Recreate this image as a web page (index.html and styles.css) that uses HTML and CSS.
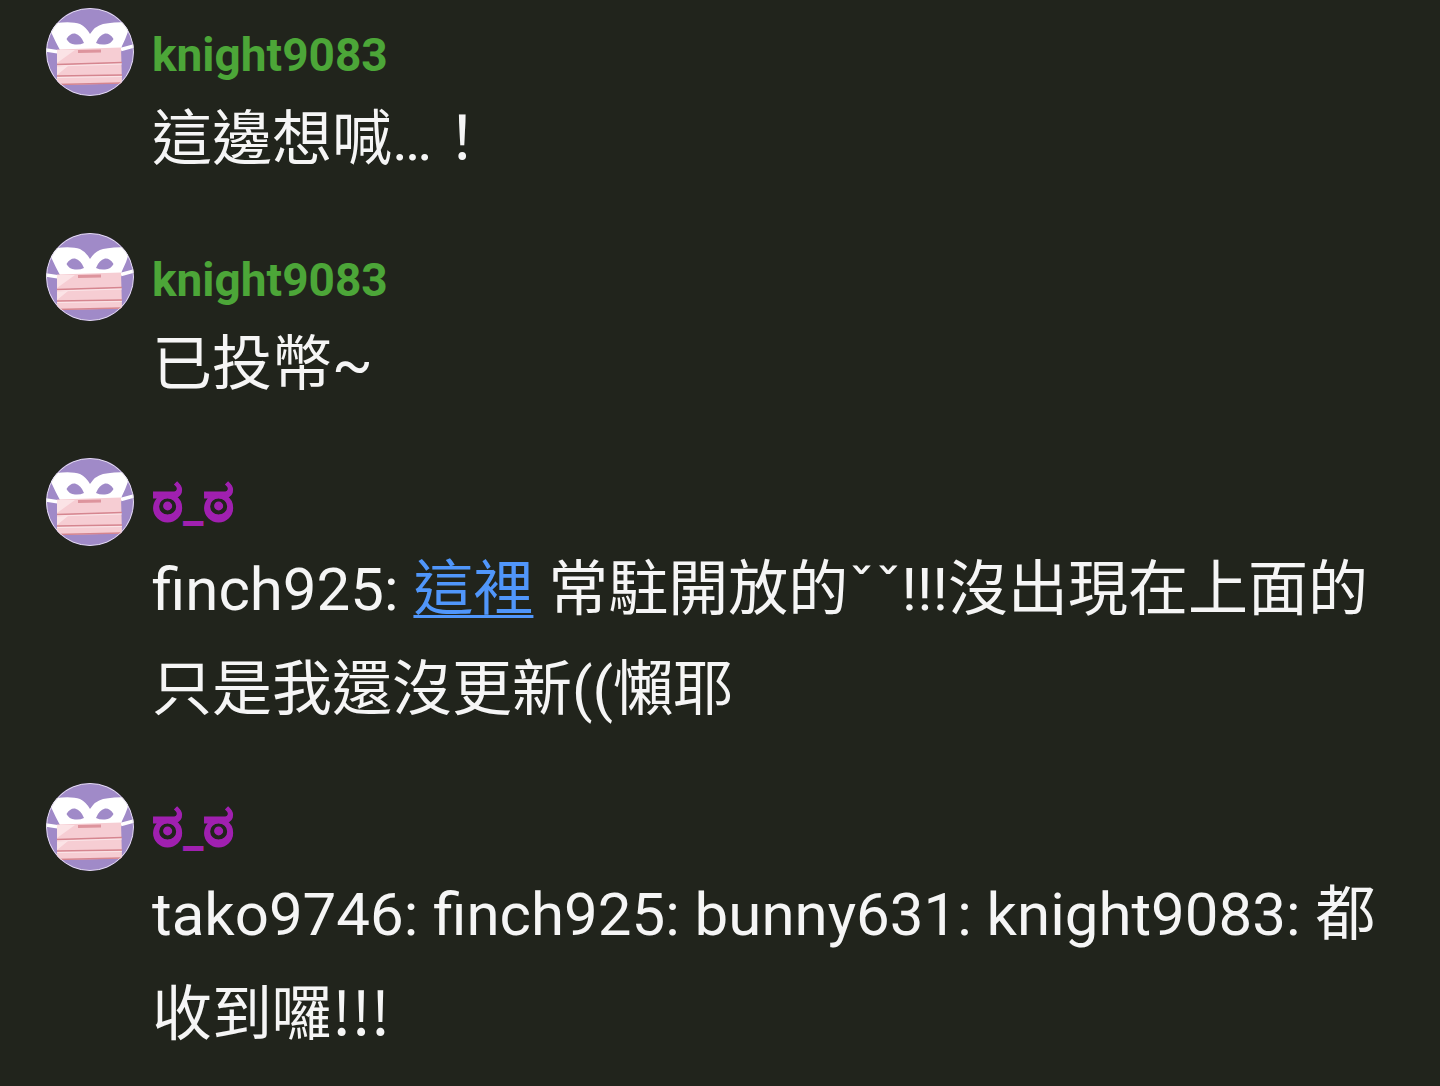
FILE: index.html
```html
<!DOCTYPE html>
<html lang="zh-Hant">
<head>
  <meta charset="UTF-8" />
  <meta name="viewport" content="width=device-width, initial-scale=1.0"/>
  <title>Chat</title>
  <link rel="stylesheet" href="styles.css">
</head>
<body>

  <!-- shared avatar drawing -->
  <svg class="sprite" aria-hidden="true">
    <symbol id="avatar" viewBox="0 0 88 88">
      <clipPath id="circle"><circle cx="44" cy="44" r="44"/></clipPath>
      <g clip-path="url(#circle)">
        <rect width="88" height="88" fill="#a08ac8"/>
        <path d="M0 15 H10 Q26 13 34 16 Q40 19 44 26 Q49 18 57 16 Q66 14 84 14 Q83 24 76 38 L74 44 H15 Q9 33 5 24 L0 20 Z" fill="#fff"/>
        <path d="M20.500 31 Q24 25 29 25.500 Q35 27 38 35 Q34 37 29 36.500 Q23 36 20.500 31Z M67.500 31 Q64 25 59 25.500 Q53 27 50 35 Q54 37 59 36.500 Q65 36 67.500 31Z" fill="#a08ac8"/>
        <path d="M0 42 L13 44 M75 41.500 L88 38" stroke="#fff" stroke-width="3.500"/>
        <path d="M11 41.500 L75 39.500 L76 75.500 L11 77Z" fill="#f6cdd3"/>
        <path d="M11 42 H29 L11 55Z M11 67 L22 58 L11 59Z" fill="#fbe3e6"/>
        <path d="M32 43.500 L55 43" stroke="#dd949d" stroke-width="3"/>
        <path d="M11 56.500 L76 54.500 M11 68 L76 67 M11 76.500 L76 75" stroke="#d5858f" stroke-width="1.500"/>
        <path d="M11 58 L76 56 M11 69.500 L76 68.500" stroke="#fff" stroke-opacity=".5"/>
        <circle cx="44" cy="44" r="43.500" fill="none" stroke="#e4deed"/>
      </g>
    </symbol>
  </svg>

  <main class="chat">
    <article class="message">
      <svg class="avatar" aria-hidden="true"><use href="#avatar"/></svg>
      <h2 class="name green">knight9083</h2>
      <p class="text">這邊想喊…！</p>
    </article>

    <article class="message">
      <svg class="avatar" aria-hidden="true"><use href="#avatar"/></svg>
      <h2 class="name green">knight9083</h2>
      <p class="text">已投幣~</p>
    </article>

    <article class="message">
      <svg class="avatar" aria-hidden="true"><use href="#avatar"/></svg>
      <h2 class="name purple"><span class="eye">ಠ</span>_<span class="eye">ಠ</span></h2>
      <p class="text">finch925: <a href="#">這裡</a> 常駐開放的ˇˇ!!!沒出現在上面的只是我還沒更新((懶耶</p>
    </article>

    <article class="message">
      <svg class="avatar" aria-hidden="true"><use href="#avatar"/></svg>
      <h2 class="name purple"><span class="eye">ಠ</span>_<span class="eye">ಠ</span></h2>
      <p class="text">tako9746: finch925: bunny631: knight9083: 都<span class="cjk">收到囉!!!</span></p>
    </article>
  </main>

</body>
</html>
```
FILE: styles.css
```css
* {
  margin: 0;
  padding: 0;
  box-sizing: border-box;
}

body {
  background-color: #21241c;
  color: #f5f5f5;
  font-family: Roboto, "Noto Sans CJK TC", sans-serif;
}

.sprite {
  position: absolute;
  width: 0;
  height: 0;
}

.chat {
  display: flex;
  flex-direction: column;
  gap: 43px;
  padding: 8px 40px 0 46px;
}

/* avatar on the left, name above the text */
.message {
  display: grid;
  grid-template-columns: 88px 1fr;
  grid-template-rows: 82px auto;
  column-gap: 18px;
}

.avatar {
  grid-row: 1 / 3;
  width: 88px;
  height: 88px;
}

.name {
  font-size: 46px;
  font-weight: 700;
  line-height: 94px;
}

.eye {
  font-size: 59px;
  line-height: 1px;
  -webkit-text-stroke: 1px #a020b0;
}

.green {
  color: #4ca638;
}

.purple {
  color: #a020b0;
}

.text {
  font-size: 60px;
  line-height: 100px;
}

.text a {
  color: #5096fa;
  text-decoration: underline;
  text-decoration-thickness: 3px;
  text-underline-offset: 5px;
}

.cjk {
  font-family: "Noto Sans CJK TC", sans-serif;
  line-height: 1px;
}
```
